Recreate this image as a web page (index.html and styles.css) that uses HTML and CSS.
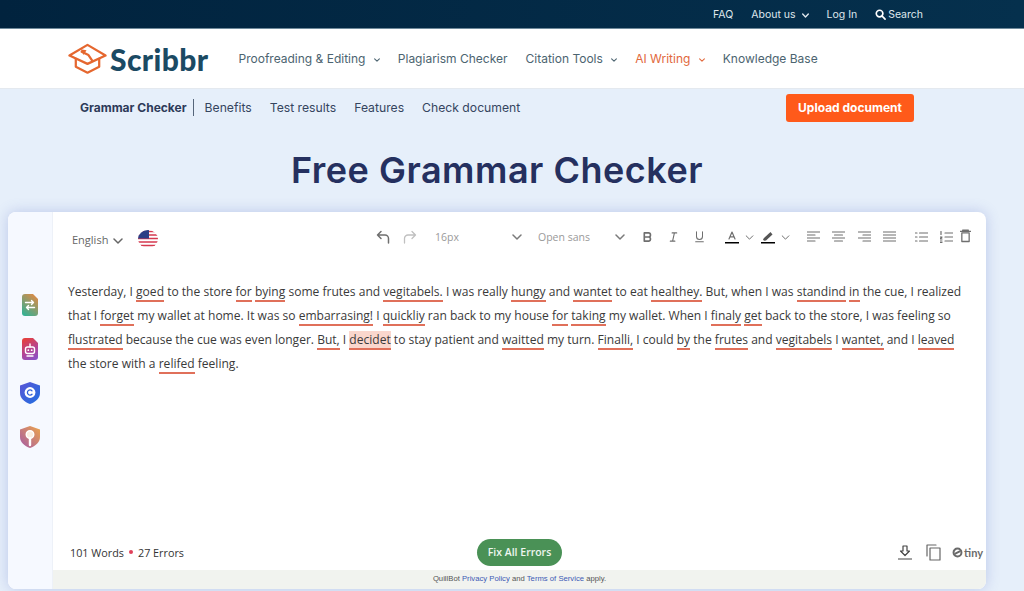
FILE: index.html
```html
<!DOCTYPE html>
<html lang="en">
<head>
    <meta charset="UTF-8">
    <title>Free Grammar Checker</title>
    <link rel="stylesheet" href="styles.css">
</head>
<body>
    <!-- Top bar -->
    <div class="topbar">
        <a>FAQ</a>
        <a>About us <svg class="chev-top" viewBox="0 0 10 6"><path d="M1 1l4 4 4-4"/></svg></a>
        <a>Log In</a>
        <a class="search"><svg viewBox="0 0 12 12"><circle cx="5" cy="5" r="3.6"/><path d="M7.8 7.8L11 11"/></svg>Search</a>
    </div>

    <!-- Main nav -->
    <div class="navbar">
        <div class="logo">
            <svg viewBox="0 0 40 31"><path d="M20 1.500L38.500 12.500 20 21 1.500 12.500z"/><path d="M8 16v8l12 6 12-6v-8"/><path d="M14 8.500l7 3.500 4 6"/><path d="M13 6l6 1-3 5z" class="logo-fill"/></svg>
            <span>Scribbr</span>
        </div>
        <a>Proofreading &amp; Editing <svg class="chev" viewBox="0 0 10 6"><path d="M1 1l4 4 4-4"/></svg></a>
        <a>Plagiarism Checker</a>
        <a>Citation Tools <svg class="chev" viewBox="0 0 10 6"><path d="M1 1l4 4 4-4"/></svg></a>
        <a class="active">AI Writing <svg class="chev" viewBox="0 0 10 6"><path d="M1 1l4 4 4-4"/></svg></a>
        <a>Knowledge Base</a>
    </div>

    <!-- Section nav -->
    <div class="subnav">
        <strong>Grammar Checker</strong>
        <a>Benefits</a>
        <a>Test results</a>
        <a>Features</a>
        <a>Check document</a>
        <button class="upload">Upload document</button>
    </div>

    <h1>Free Grammar Checker</h1>

    <div class="card">
        <div class="sidebar">
            <svg class="doc" viewBox="0 0 16 22"><defs><linearGradient id="g1" x1=".8" y1="0" x2=".2" y2="1"><stop offset="0" stop-color="#e08a45"/><stop offset=".55" stop-color="#7f9f72"/><stop offset="1" stop-color="#35b193"/></linearGradient></defs><path d="M3 0h8l5 5v14a3 3 0 0 1-3 3H3a3 3 0 0 1-3-3V3a3 3 0 0 1 3-3z" fill="url(#g1)"/><path d="M3.500 8.500h8M9.500 6.500l2 2-2 2M12.500 13.500h-8M6.500 11.500l-2 2 2 2" stroke="#fff" stroke-width="1.400" fill="none"/></svg>
            <svg class="doc" viewBox="0 0 16 22"><defs><linearGradient id="g2" x1=".3" y1="0" x2=".7" y2="1"><stop offset="0" stop-color="#e4403f"/><stop offset=".6" stop-color="#b0449a"/><stop offset="1" stop-color="#8b50c4"/></linearGradient></defs><path d="M3 0h8l5 5v14a3 3 0 0 1-3 3H3a3 3 0 0 1-3-3V3a3 3 0 0 1 3-3z" fill="url(#g2)"/><rect x="3.500" y="9" width="9" height="6.500" rx="2" fill="none" stroke="#fff" stroke-width="1.400"/><path d="M8 6v3M5 18h6" stroke="#fff" stroke-width="1.400"/><circle cx="6.300" cy="12.200" r=".9" fill="#fff"/><circle cx="9.700" cy="12.200" r=".9" fill="#fff"/></svg>
            <svg viewBox="0 0 20 22"><defs><linearGradient id="g3" x1="0" y1="0" x2="1" y2="1"><stop offset="0" stop-color="#5a55d6"/><stop offset="1" stop-color="#1f6fe0"/></linearGradient></defs><path d="M10 0l10 3.500V11c0 5.500-4.500 9-10 11C4.500 20 0 16.500 0 11V3.500z" fill="url(#g3)"/><circle cx="10" cy="10.500" r="5.400" fill="#fff"/><path d="M12 8.800a2.600 2.600 0 1 0 0 3.400" fill="none" stroke="#2f5fd8" stroke-width="1.300"/></svg>
            <svg viewBox="0 0 20 22"><defs><linearGradient id="g4" x1="1" y1="0" x2="0" y2="1"><stop offset="0" stop-color="#eda54a"/><stop offset="1" stop-color="#a55aa8"/></linearGradient></defs><path d="M10 0l10 3.500V11c0 5.500-4.500 9-10 11C4.500 20 0 16.500 0 11V3.500z" fill="url(#g4)"/><circle cx="10" cy="8.500" r="3.800" fill="#fbeee0" stroke="#fff" stroke-width="1.400"/><path d="M10 12.500V19" stroke="#fff" stroke-width="2.400"/></svg>
        </div>

        <div class="editor">
            <div class="toolbar">
                <span class="lang">English <svg class="chev-lang" viewBox="0 0 10 6"><path d="M1 1l4 4 4-4"/></svg></span>
                <svg class="flag" viewBox="0 0 20 18">
                    <defs><clipPath id="round"><ellipse cx="10" cy="9" rx="10" ry="9"/></clipPath></defs>
                    <g clip-path="url(#round)">
                        <rect width="20" height="18" fill="#fff"/>
                        <path d="M0 1.500h20M0 5h20M0 8.500h20M0 12h20M0 15.500h20" stroke="#d5394f" stroke-width="1.700"/>
                        <rect width="11" height="8.500" fill="#2c3f85"/>
                    </g>
                </svg>

                <svg class="tb undo" viewBox="0 0 14 14"><path d="M5 1.500L1.500 5 5 8.500M1.500 5H9a3.500 3.500 0 0 1 3.500 3.500V13"/></svg>
                <svg class="tb redo" viewBox="0 0 14 14"><path d="M9 1.500L12.500 5 9 8.500M12.500 5H5a3.500 3.500 0 0 0-3.500 3.500V13"/></svg>
                <span class="select size">16px <svg class="chev-lang" viewBox="0 0 10 6"><path d="M1 1l4 4 4-4"/></svg></span>
                <span class="select family">Open sans <svg class="chev-lang" viewBox="0 0 10 6"><path d="M1 1l4 4 4-4"/></svg></span>

                <svg class="tb fmt" viewBox="0 0 12 12"><path class="thick" d="M2.500 1.500H7a2.200 2.200 0 0 1 0 4.500H2.500zM2.500 6H7.500a2.300 2.300 0 0 1 0 4.500h-5z"/></svg>
                <svg class="tb fmt" viewBox="0 0 12 12"><path d="M4.500 1.500h5M2.500 10.500h5M7 1.500l-2 9"/></svg>
                <svg class="tb fmt" viewBox="0 0 12 14"><path d="M2.500 1v5.500a3.500 3.500 0 0 0 7 0V1M1.500 12.500h9"/></svg>

                <svg class="tb color" viewBox="0 0 14 14"><path d="M4 9l3-7 3 7M5 6.800h4"/><path class="bar" d="M0 12.800h14"/></svg>
                <svg class="chev-sm" viewBox="0 0 10 6"><path d="M1 1l4 4 4-4"/></svg>
                <svg class="tb color pen" viewBox="0 0 14 14"><path class="solid" d="M2 9.500l1 1.300L5 10.500 11.500 4.500 9.500 2 3 8z"/><path class="bar" d="M0 12.800h14"/></svg>
                <svg class="chev-sm" viewBox="0 0 10 6"><path d="M1 1l4 4 4-4"/></svg>

                <svg class="tb align" viewBox="0 0 13 12"><path d="M0 1h13M0 4h8M0 7h13M0 10h8"/></svg>
                <svg class="tb align" viewBox="0 0 13 12"><path d="M0 1h13M2.500 4h8M0 7h13M2.500 10h8"/></svg>
                <svg class="tb align" viewBox="0 0 13 12"><path d="M0 1h13M5 4h8M0 7h13M5 10h8"/></svg>
                <svg class="tb align" viewBox="0 0 13 12"><path d="M0 1h13M0 4h13M0 7h13M0 10h13"/></svg>
                <svg class="tb list" viewBox="0 0 13 12"><path d="M4.500 2h8.500M4.500 6h8.500M4.500 10h8.500M0 2h2M0 6h2M0 10h2"/></svg>
                <svg class="tb list" viewBox="0 0 13 12"><path d="M5 2h8M5 6h8M5 10h8M1 .5v3M0 6h2L0 8h2M0 10h2M0 11.500h2"/></svg>
                <svg class="tb trash" viewBox="0 0 12 14"><path d="M2 3.500h8V13H2zM0 2h12"/><path class="thick" d="M3 .8h6"/></svg>
            </div>

            <p class="text">Yesterday, I <u>goed</u> to the store <u>for</u> <u>bying</u> some frutes and <u>vegitabels.</u> I was really <u>hungy</u> and <u>wantet</u> to eat <u>healthey.</u> But, when I was <u>standind</u> <u>in</u> the cue, I realized that I <u>forget</u> my wallet at home. It was so <u>embarrasing!</u> I <u>quickliy</u> ran back to my house <u>for</u> <u>taking</u> my wallet. When I <u>finaly</u> <u>get</u> back to the store, I was feeling so <u>flustrated</u> because the cue was even longer. <u>But,</u> I <u class="current">decidet</u> to stay patient and <u>waitted</u> my turn. <u>Finalli,</u> I could <u>by</u> the <u>frutes</u> and <u>vegitabels</u> I <u>wantet,</u> and I <u>leaved</u> the store with a <u>relifed</u> feeling.</p>

            <div class="footer">
                <div class="counts">101 Words <i class="dot"></i> 27 Errors</div>
                <button class="fix">Fix All Errors</button>
                <div class="tools">
                    <svg class="download" viewBox="0 0 14 15"><path d="M5 1h4v5h2.500L7 10.500 2.500 6H5zM.5 14h13"/></svg>
                    <svg class="copy" viewBox="0 0 15 17"><path d="M1 12V1h9"/><path d="M4 4h10v12H4z"/></svg>
                    <span class="tiny"><svg viewBox="0 0 10 10"><circle cx="5" cy="5" r="3.600"/><path d="M3 6l4-2"/></svg>tiny</span>
                </div>
            </div>
            <div class="legal">QuillBot <a>Privacy Policy</a> and <a>Terms of Service</a> apply.</div>
        </div>
    </div>
</body>
</html>
```

FILE: styles.css
```css
* { box-sizing: border-box; margin: 0; padding: 0; }
html, body { height: 591px; overflow: hidden; }
body {
    font-family: Inter, sans-serif;
    background: #e6effa;
    color: #35455f;
}
svg { fill: none; stroke: currentColor; stroke-linecap: round; stroke-linejoin: round; }

/* top bar */
.topbar {
    height: 29px;
    background: linear-gradient(90deg, #01233e 0%, #05304d 100%);
    border-bottom: 1px solid #6f8a9b;
    display: flex;
    align-items: center;
    justify-content: flex-end;
    gap: 18px;
    padding-right: 101px;
    font-size: 10.500px;
    color: #dfe7ed;
}
.chev-top { width: 7px; height: 5px; margin-left: 3px; stroke-width: 2; }
.search { display: flex; align-items: center; gap: 2px; }
.search svg { width: 11px; height: 11px; stroke: #fff; stroke-width: 1.800; }

/* main nav */
.navbar {
    height: 60px;
    background: #fff;
    border-bottom: 1px solid #e4e9ef;
    display: flex;
    align-items: center;
    gap: 18px;
    padding-left: 68px;
    font-size: 12px;
    color: #4c6470;
}
.navbar .active { color: #e2683c; }
.chev { width: 6px; height: 4px; margin-left: 5px; vertical-align: 1px; stroke-width: 1.800; }
.logo { display: flex; align-items: center; gap: 3px; margin-right: 12px; color: #e5672f; }
.logo svg { width: 39px; height: 31px; stroke-width: 2.300; }
.logo .logo-fill { fill: #e5672f; stroke: none; }
.logo span {
    font-family: Lato, sans-serif;
    font-weight: 900;
    font-size: 30px;
    letter-spacing: .4px;
    color: #1b4a63;
}

/* section nav */
.subnav {
    height: 38px;
    display: flex;
    align-items: center;
    gap: 18px;
    padding-left: 80px;
    font-size: 12.200px;
}
.subnav a { margin-bottom: 2px; }
.subnav strong {
    font-size: 12px;
    color: #2d3a58;
    padding-right: 6px;
    margin: 0 -7px 2px 0;
    border-right: 1px solid #55657a;
    line-height: 17px;
}
.upload {
    margin-left: auto;
    margin-right: 110px;
    width: 128px;
    height: 28px;
    border: none;
    border-radius: 3px;
    background: #ff5a1a;
    color: #fff;
    font-family: Inter, sans-serif;
    font-weight: 700;
    font-size: 12px;
    padding-bottom: 2px;
}

h1 {
    font-size: 36px;
    font-weight: 600;
    letter-spacing: .5px;
    color: #25305f;
    text-align: center;
    padding-right: 30px;
    margin-top: 22px;
    line-height: 42px;
}

/* editor card */
.card {
    margin: 21px 0 0 8px;
    width: 978px;
    height: 377px;
    background: #fff;
    border-radius: 8px;
    box-shadow: 0 0 14px rgba(90, 110, 200, .3);
    display: flex;
    overflow: hidden;
}
.sidebar {
    width: 45px;
    background: #f6f9ff;
    border-right: 1px solid #edf1f8;
    display: flex;
    flex-direction: column;
    align-items: center;
    gap: 22px;
    padding: 82px 0 0 0;
    flex-shrink: 0;
}
.sidebar svg { height: 22px; width: 20px; stroke: none; margin-right: 1px; }
.sidebar .doc { width: 16px; }
.editor { flex: 1; display: flex; flex-direction: column; min-width: 0; }

.toolbar {
    height: 50px;
    display: flex;
    align-items: center;
    padding: 0 0 0 19px;
    color: #6f6f6f;
}
.lang { font-family: "Open Sans", sans-serif; font-size: 11px; color: #666; width: 66px; margin-top: 4px; }
.chev-lang { width: 10px; height: 6px; margin-left: 2px; stroke-width: 1.500; }
.flag { width: 20px; height: 18px; stroke: none; margin-top: 3px; }
.flag path { stroke-linecap: butt; }
.tb { flex-shrink: 0; stroke-width: 1.200; }
.undo { width: 14px; height: 14px; margin-left: 218px; stroke-width: 1.500; }
.redo { width: 14px; height: 14px; margin-left: 13px; color: #c0c0c0; stroke-width: 1.300; }
.select { font-family: "Open Sans", sans-serif; font-size: 10.500px; color: #9a9a9a; display: flex; align-items: center; justify-content: space-between; }
.select .chev-lang { color: #7a7a7a; }
.size { width: 87px; margin-left: 18px; }
.family { width: 87px; margin-left: 16px; }
.fmt { width: 11px; height: 12px; }
.family + .fmt { margin-left: 17px; }
.fmt + .fmt { margin-left: 15px; }
.fmt + .color { margin-left: 20px; }
.thick { stroke-width: 1.800; }
.color { width: 14px; height: 14px; }
.bar { stroke: #000; stroke-width: 1.600; stroke-linecap: butt; }
.solid { fill: #555; stroke: none; }
.chev-sm { width: 9px; height: 5px; margin-left: 6px; stroke-width: 1.200; }
.chev-sm + .pen { margin-left: 7px; }
.chev-sm + .align { margin-left: 17px; }
.align { width: 13px; height: 12px; }
.align + .align { margin-left: 12.300px; }
.align + .list { margin-left: 19px; }
.list { width: 13px; height: 12px; }
.list + .list { margin-left: 12px; }
.trash { width: 11px; height: 14px; margin-left: 7px; margin-bottom: 3px; stroke-width: 1.400; }

/* text */
.text {
    font-family: "Open Sans", sans-serif;
    font-size: 12.050px;
    line-height: 24px;
    color: #3a3a3a;
    padding: 18px 14px 0 15px;
    flex: 1;
}
.text u {
    text-decoration: none;
    border-bottom: 2px solid #e0705a;
}
.text .current { background: #fad7cd; }

/* footer */
.footer {
    display: grid;
    grid-template-columns: 1fr auto 1fr;
    align-items: center;
    padding-bottom: 4px;
}
.counts { font-family: "Open Sans", sans-serif; font-size: 10.800px; color: #333; display: flex; align-items: center; gap: 5px; padding: 0 0 1px 17px; }
.dot { width: 4px; height: 4px; border-radius: 50%; background: #e0405a; }
.fix {
    width: 85px;
    height: 27px;
    border: none;
    border-radius: 14px;
    background: #4a9156;
    color: #eef6ef;
    font-family: "Open Sans", sans-serif;
    font-weight: 600;
    font-size: 10.500px;
    padding-bottom: 2px;
}
.tools { display: flex; justify-content: flex-end; align-items: center; color: #666; padding-right: 3px; }
.download { width: 14px; height: 15px; stroke-width: 1.200; color: #444; }
.copy { width: 15px; height: 17px; margin-left: 14px; stroke-width: 1.200; }
.tiny { display: flex; align-items: center; margin-left: 11px; font-family: Lato, sans-serif; font-weight: 700; font-size: 11px; color: #6a6a6a; }
.tiny svg { width: 11px; height: 11px; stroke-width: 1.800; margin-right: 1px; }

.legal {
    height: 19px;
    background: #f1f3ef;
    font-family: "Liberation Sans", sans-serif;
    font-size: 7.700px;
    color: #555;
    text-align: center;
    line-height: 17px;
}
.legal a { color: #3d5bb5; }
```
